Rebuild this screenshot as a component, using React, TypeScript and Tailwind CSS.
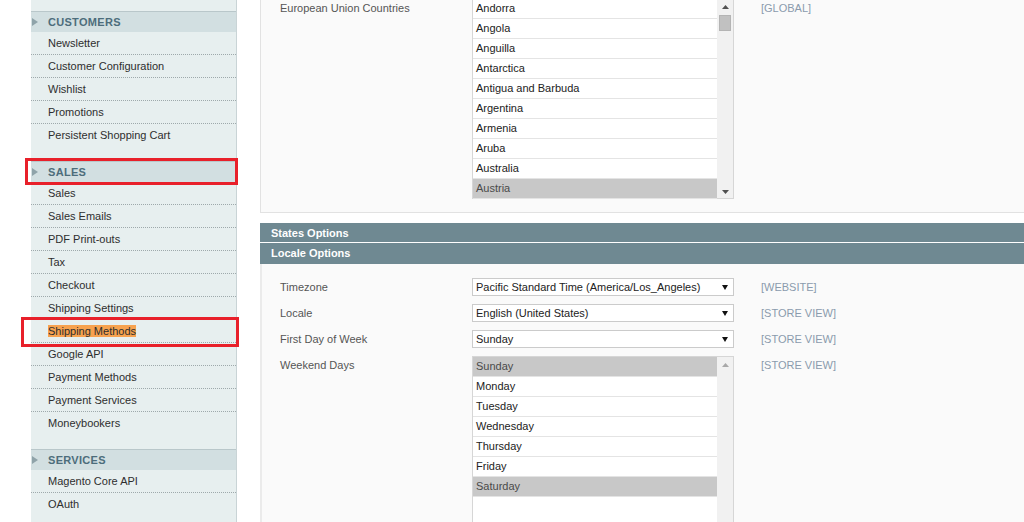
const customers = ["Newsletter", "Customer Configuration", "Wishlist", "Promotions", "Persistent Shopping Cart"];
const sales = [
  "Sales",
  "Sales Emails",
  "PDF Print-outs",
  "Tax",
  "Checkout",
  "Shipping Settings",
  "Shipping Methods",
  "Google API",
  "Payment Methods",
  "Payment Services",
  "Moneybookers",
];
const services = ["Magento Core API", "OAuth"];

const countries = [
  "Andorra",
  "Angola",
  "Anguilla",
  "Antarctica",
  "Antigua and Barbuda",
  "Argentina",
  "Armenia",
  "Aruba",
  "Australia",
  "Austria",
];
const days = ["Sunday", "Monday", "Tuesday", "Wednesday", "Thursday", "Friday", "Saturday"];

function NavSection({ title, items, last = false }: { title: string; items: string[]; last?: boolean }) {
  return (
    <div className={last ? "" : "pb-[14px]"}>
      <div className="relative flex h-[21px] items-center border-t border-[#b9c7ca] bg-[#d2dfe1] pl-[17px]">
        <svg className="absolute left-[1px] top-[6px]" width="7" height="8" viewBox="0 0 7 8">
          <path d="M0 0 L6 4 L0 8 Z" fill="#8fa3a9" />
        </svg>
        <span className="text-[11px] font-bold uppercase tracking-[0.3px] text-[#4d6d7b]">{title}</span>
      </div>
      <ul>
        {items.map((item, i) => (
          <li
            key={item}
            className={[
              "h-[23px] border-b border-dotted pl-[17px] text-[11px] leading-[23px] text-[#2e2e2e]",
              i === items.length - 1 ? "border-transparent" : "border-[#9ea9ab]",
            ].join(" ")}
          >
            {item === "Shipping Methods" ? <span className="bg-[#f7a24f]">{item}</span> : item}
          </li>
        ))}
      </ul>
    </div>
  );
}

function ArrowUp({ color }: { color: string }) {
  return (
    <svg width="7" height="5" viewBox="0 0 7 5">
      <path d="M3.5 0 L7 4 L0 4 Z" fill={color} />
    </svg>
  );
}

function ArrowDown({ color }: { color: string }) {
  return (
    <svg width="7" height="5" viewBox="0 0 7 5">
      <path d="M0 1 L7 1 L3.5 5 Z" fill={color} />
    </svg>
  );
}

function MultiSelect({
  options,
  selected,
  height,
  thumb,
}: {
  options: string[];
  selected: string[];
  height: string;
  thumb: boolean;
}) {
  return (
    <div className={`flex w-[262px] shrink-0 border border-[#d6d6d6] bg-white ${height}`}>
      <div className="flex-1">
        {options.map((o) => (
          <div
            key={o}
            className={[
              "h-[20px] border-b border-[#e4e4e4] pl-[3px] text-[11px] leading-[19px]",
              selected.includes(o) ? "bg-[#c8c8c8] text-[#4a4a4a]" : "text-[#222]",
            ].join(" ")}
          >
            {o}
          </div>
        ))}
      </div>
      <div className="relative flex w-[16px] flex-col items-center bg-[#f1f1f1]">
        <div className="mt-[6px]">
          <ArrowUp color={thumb ? "#505050" : "#a8a8a8"} />
        </div>
        {thumb && <div className="mt-[5px] h-[16px] w-[12px] border border-[#b4b4b4] bg-[#c1c1c1]" />}
        {thumb && (
          <div className="absolute bottom-[4px]">
            <ArrowDown color="#505050" />
          </div>
        )}
      </div>
    </div>
  );
}

function Select({ value }: { value: string }) {
  return (
    <div className="flex h-[18px] w-[262px] shrink-0 items-center justify-between border border-[#cbcbcb] bg-white pl-[3px] pr-[5px] text-[11px] text-[#222]">
      <span>{value}</span>
      <svg width="6" height="5" viewBox="0 0 6 5">
        <path d="M0 0 L6 0 L3 5 Z" fill="#111" />
      </svg>
    </div>
  );
}

function Row({ label, scope, children }: { label: string; scope: string; children: React.ReactNode }) {
  return (
    <div className="flex items-start">
      <div className="w-[210px] shrink-0 pl-[18px] text-[11px] leading-[18px] text-[#555]">{label}</div>
      {children}
      <div className="ml-[27px] text-[11px] leading-[18px] text-[#8a9bad]">{scope}</div>
    </div>
  );
}

export default function App() {
  return (
    <div className="relative flex h-[522px] w-[1024px] overflow-hidden bg-white font-['Liberation_Sans',Arial,sans-serif]">
      <div className="w-[31px] shrink-0" />
      <aside className="w-[206px] shrink-0 border-r border-[#c9d4d6] bg-[#e7efef]">
        <div className="h-[11px]" />
        <NavSection title="Customers" items={customers} />
        <NavSection title="Sales" items={sales} />
        <NavSection title="Services" items={services} last />
      </aside>
      <div className="w-[23px] shrink-0" />
      <main className="flex-1">
        <div className="h-[213px] border-b border-l border-[#e2e2e2] bg-[#fafafa]">
          <div className="flex items-start">
            <div className="w-[211px] shrink-0 pl-[19px] text-[11px] leading-[16px] text-[#555]">European Union Countries</div>
            <div className="-mt-[2px]">
              <MultiSelect options={countries} selected={["Austria"]} height="h-[201px]" thumb />
            </div>
            <div className="ml-[27px] text-[11px] leading-[16px] text-[#8a9bad]">[GLOBAL]</div>
          </div>
        </div>
        <div className="mt-[10px] h-[20px] border-b border-white bg-[#6f8992] pl-[11px] text-[11px] font-bold leading-[20px] text-white">
          States Options
        </div>
        <div className="h-[21px] bg-[#6f8992] pl-[11px] text-[11px] font-bold leading-[20px] text-white">Locale Options</div>
        <div className="flex h-[300px] flex-col gap-[8px] border-l-2 border-[#ebebeb] bg-[#fafafa] pt-[14px]">
          <Row label="Timezone" scope="[WEBSITE]">
            <Select value="Pacific Standard Time (America/Los_Angeles)" />
          </Row>
          <Row label="Locale" scope="[STORE VIEW]">
            <Select value="English (United States)" />
          </Row>
          <Row label="First Day of Week" scope="[STORE VIEW]">
            <Select value="Sunday" />
          </Row>
          <Row label="Weekend Days" scope="[STORE VIEW]">
            <MultiSelect options={days} selected={["Sunday", "Saturday"]} height="h-[200px]" thumb={false} />
          </Row>
        </div>
      </main>

      <div className="absolute left-[25px] top-[158px] h-[27px] w-[213px] border-[3px] border-[#e8202a]" />
      <div className="absolute left-[21px] top-[317px] h-[30px] w-[218px] border-[3px] border-[#e8202a]" />
    </div>
  );
}
